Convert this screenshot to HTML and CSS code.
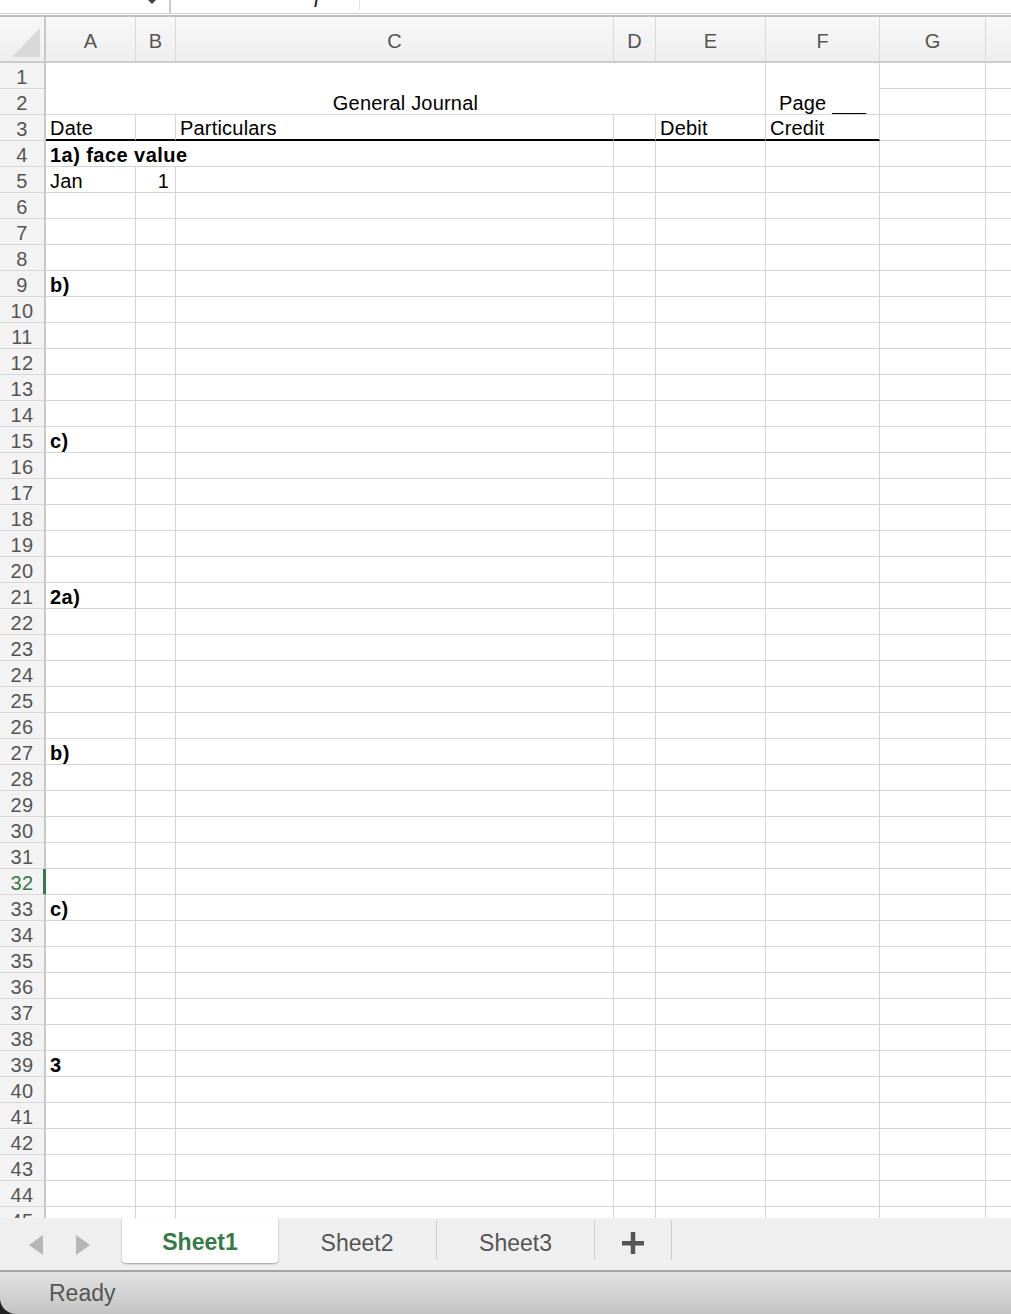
FILE: index.html
```html
<!DOCTYPE html>
<html>
<head>
<meta charset="utf-8">
<link rel="stylesheet" href="styles.css">
</head>
<body>
<div class="topbar">
  <div class="namebox"><span class="caret"></span></div>
  <div class="formula"><span class="fx">f</span><span class="fdiv"></span></div>
</div>
<div class="sheet">
  <div class="corner"><svg width="44" height="44" viewBox="0 0 44 44"><polygon points="40,11 40,40 12,40" fill="#d9d9d9"/></svg></div>
  <div class="ch">A</div><div class="ch">B</div><div class="ch">C</div><div class="ch">D</div><div class="ch">E</div><div class="ch">F</div><div class="ch">G</div><div class="ch"></div>

  <div class="rh">1</div><div class="c m s5 r2">General Journal</div><div class="c m r2">Page ___</div><div class="c"></div><div class="c"></div>
  <div class="rh">2</div><div class="c"></div><div class="c"></div>

  <div class="rh">3</div><div class="c t">Date</div><div class="c t"></div><div class="c t">Particulars</div><div class="c t"></div><div class="c t">Debit</div><div class="c t">Credit</div><div class="c"></div><div class="c"></div>
  <div class="rh">4</div><div class="c b s3">1a) face value</div><div class="c"></div><div class="c"></div><div class="c"></div><div class="c"></div><div class="c"></div>
  <div class="rh">5</div><div class="c">Jan</div><div class="c r">1</div><div class="c"></div><div class="c"></div><div class="c"></div><div class="c"></div><div class="c"></div><div class="c"></div>
  <div class="rh">6</div><div class="c"></div><div class="c"></div><div class="c"></div><div class="c"></div><div class="c"></div><div class="c"></div><div class="c"></div><div class="c"></div>
  <div class="rh">7</div><div class="c"></div><div class="c"></div><div class="c"></div><div class="c"></div><div class="c"></div><div class="c"></div><div class="c"></div><div class="c"></div>
  <div class="rh">8</div><div class="c"></div><div class="c"></div><div class="c"></div><div class="c"></div><div class="c"></div><div class="c"></div><div class="c"></div><div class="c"></div>
  <div class="rh">9</div><div class="c b">b)</div><div class="c"></div><div class="c"></div><div class="c"></div><div class="c"></div><div class="c"></div><div class="c"></div><div class="c"></div>
  <div class="rh">10</div><div class="c"></div><div class="c"></div><div class="c"></div><div class="c"></div><div class="c"></div><div class="c"></div><div class="c"></div><div class="c"></div>
  <div class="rh">11</div><div class="c"></div><div class="c"></div><div class="c"></div><div class="c"></div><div class="c"></div><div class="c"></div><div class="c"></div><div class="c"></div>
  <div class="rh">12</div><div class="c"></div><div class="c"></div><div class="c"></div><div class="c"></div><div class="c"></div><div class="c"></div><div class="c"></div><div class="c"></div>
  <div class="rh">13</div><div class="c"></div><div class="c"></div><div class="c"></div><div class="c"></div><div class="c"></div><div class="c"></div><div class="c"></div><div class="c"></div>
  <div class="rh">14</div><div class="c"></div><div class="c"></div><div class="c"></div><div class="c"></div><div class="c"></div><div class="c"></div><div class="c"></div><div class="c"></div>
  <div class="rh">15</div><div class="c b">c)</div><div class="c"></div><div class="c"></div><div class="c"></div><div class="c"></div><div class="c"></div><div class="c"></div><div class="c"></div>
  <div class="rh">16</div><div class="c"></div><div class="c"></div><div class="c"></div><div class="c"></div><div class="c"></div><div class="c"></div><div class="c"></div><div class="c"></div>
  <div class="rh">17</div><div class="c"></div><div class="c"></div><div class="c"></div><div class="c"></div><div class="c"></div><div class="c"></div><div class="c"></div><div class="c"></div>
  <div class="rh">18</div><div class="c"></div><div class="c"></div><div class="c"></div><div class="c"></div><div class="c"></div><div class="c"></div><div class="c"></div><div class="c"></div>
  <div class="rh">19</div><div class="c"></div><div class="c"></div><div class="c"></div><div class="c"></div><div class="c"></div><div class="c"></div><div class="c"></div><div class="c"></div>
  <div class="rh">20</div><div class="c"></div><div class="c"></div><div class="c"></div><div class="c"></div><div class="c"></div><div class="c"></div><div class="c"></div><div class="c"></div>
  <div class="rh">21</div><div class="c b">2a)</div><div class="c"></div><div class="c"></div><div class="c"></div><div class="c"></div><div class="c"></div><div class="c"></div><div class="c"></div>
  <div class="rh">22</div><div class="c"></div><div class="c"></div><div class="c"></div><div class="c"></div><div class="c"></div><div class="c"></div><div class="c"></div><div class="c"></div>
  <div class="rh">23</div><div class="c"></div><div class="c"></div><div class="c"></div><div class="c"></div><div class="c"></div><div class="c"></div><div class="c"></div><div class="c"></div>
  <div class="rh">24</div><div class="c"></div><div class="c"></div><div class="c"></div><div class="c"></div><div class="c"></div><div class="c"></div><div class="c"></div><div class="c"></div>
  <div class="rh">25</div><div class="c"></div><div class="c"></div><div class="c"></div><div class="c"></div><div class="c"></div><div class="c"></div><div class="c"></div><div class="c"></div>
  <div class="rh">26</div><div class="c"></div><div class="c"></div><div class="c"></div><div class="c"></div><div class="c"></div><div class="c"></div><div class="c"></div><div class="c"></div>
  <div class="rh">27</div><div class="c b">b)</div><div class="c"></div><div class="c"></div><div class="c"></div><div class="c"></div><div class="c"></div><div class="c"></div><div class="c"></div>
  <div class="rh">28</div><div class="c"></div><div class="c"></div><div class="c"></div><div class="c"></div><div class="c"></div><div class="c"></div><div class="c"></div><div class="c"></div>
  <div class="rh">29</div><div class="c"></div><div class="c"></div><div class="c"></div><div class="c"></div><div class="c"></div><div class="c"></div><div class="c"></div><div class="c"></div>
  <div class="rh">30</div><div class="c"></div><div class="c"></div><div class="c"></div><div class="c"></div><div class="c"></div><div class="c"></div><div class="c"></div><div class="c"></div>
  <div class="rh">31</div><div class="c"></div><div class="c"></div><div class="c"></div><div class="c"></div><div class="c"></div><div class="c"></div><div class="c"></div><div class="c"></div>
  <div class="rh sel">32</div><div class="c"></div><div class="c"></div><div class="c"></div><div class="c"></div><div class="c"></div><div class="c"></div><div class="c"></div><div class="c"></div>
  <div class="rh">33</div><div class="c b">c)</div><div class="c"></div><div class="c"></div><div class="c"></div><div class="c"></div><div class="c"></div><div class="c"></div><div class="c"></div>
  <div class="rh">34</div><div class="c"></div><div class="c"></div><div class="c"></div><div class="c"></div><div class="c"></div><div class="c"></div><div class="c"></div><div class="c"></div>
  <div class="rh">35</div><div class="c"></div><div class="c"></div><div class="c"></div><div class="c"></div><div class="c"></div><div class="c"></div><div class="c"></div><div class="c"></div>
  <div class="rh">36</div><div class="c"></div><div class="c"></div><div class="c"></div><div class="c"></div><div class="c"></div><div class="c"></div><div class="c"></div><div class="c"></div>
  <div class="rh">37</div><div class="c"></div><div class="c"></div><div class="c"></div><div class="c"></div><div class="c"></div><div class="c"></div><div class="c"></div><div class="c"></div>
  <div class="rh">38</div><div class="c"></div><div class="c"></div><div class="c"></div><div class="c"></div><div class="c"></div><div class="c"></div><div class="c"></div><div class="c"></div>
  <div class="rh">39</div><div class="c b">3</div><div class="c"></div><div class="c"></div><div class="c"></div><div class="c"></div><div class="c"></div><div class="c"></div><div class="c"></div>
  <div class="rh">40</div><div class="c"></div><div class="c"></div><div class="c"></div><div class="c"></div><div class="c"></div><div class="c"></div><div class="c"></div><div class="c"></div>
  <div class="rh">41</div><div class="c"></div><div class="c"></div><div class="c"></div><div class="c"></div><div class="c"></div><div class="c"></div><div class="c"></div><div class="c"></div>
  <div class="rh">42</div><div class="c"></div><div class="c"></div><div class="c"></div><div class="c"></div><div class="c"></div><div class="c"></div><div class="c"></div><div class="c"></div>
  <div class="rh">43</div><div class="c"></div><div class="c"></div><div class="c"></div><div class="c"></div><div class="c"></div><div class="c"></div><div class="c"></div><div class="c"></div>
  <div class="rh">44</div><div class="c"></div><div class="c"></div><div class="c"></div><div class="c"></div><div class="c"></div><div class="c"></div><div class="c"></div><div class="c"></div>
  <div class="rh">45</div><div class="c"></div><div class="c"></div><div class="c"></div><div class="c"></div><div class="c"></div><div class="c"></div><div class="c"></div><div class="c"></div>
</div>
<div class="tabs">
  <div class="nav"><svg width="122" height="52" viewBox="0 0 122 52"><polygon points="43,17 29,27 43,37" fill="#b6b6b6"/><polygon points="76,17 90,27 76,37" fill="#b6b6b6"/></svg></div>
  <div class="tab active">Sheet1</div>
  <div class="tab">Sheet2</div>
  <div class="tab">Sheet3</div>
  <div class="tab plus"><svg width="22" height="22" viewBox="0 0 22 22"><rect x="0" y="9" width="22" height="4.5" fill="#555"/><rect x="8.75" y="0" width="4.5" height="22" fill="#555"/></svg></div>
</div>
<div class="statuswrap"><div class="status">Ready</div></div>
</body>
</html>
```
FILE: styles.css
```css
* { box-sizing: border-box; }
html, body { margin: 0; padding: 0; }
body {
  width: 1011px;
  height: 1314px;
  overflow: hidden;
  background: #fff;
  font-family: "Liberation Sans", Arial, sans-serif;
}

/* formula bar remnant */
.topbar {
  height: 14px;
  display: flex;
  overflow: hidden;
  border-bottom: 1px solid #cfcfcf;
}
.namebox {
  width: 171px;
  border-right: 2px solid #cacaca;
  margin-right: 1px;
  display: flex;
  justify-content: flex-end;
  padding-right: 13px;
}
.caret {
  width: 0;
  height: 0;
  border-left: 4px solid transparent;
  border-right: 4px solid transparent;
  border-top: 4px solid #444;
}
.formula {
  flex: 1;
  display: flex;
  align-items: flex-start;
}
.fx {
  font-family: "Liberation Serif", serif;
  font-style: italic;
  font-size: 24px;
  line-height: 24px;
  margin-top: -18px;
  margin-left: 142px;
  color: #222;
}
.fdiv {
  width: 1px;
  height: 10px;
  background: #e4e4e4;
  margin-left: 38px;
}

/* sheet grid */
.sheet {
  width: 1011px;
  height: 1203px;
  margin-top: 1px;
  overflow: hidden;
  border-top: 2px solid #bdbdbd;
  display: grid;
  grid-template-columns: 46px 90px 40px 438px 42px 110px 114px 106px 40px;
  grid-template-rows: 46px;
  grid-auto-rows: 26px;
  align-content: start;
}
.corner, .ch {
  background: linear-gradient(#f8f8f8, #eeeeee);
  border-bottom: 2px solid #cbcbcb;
}
.corner {
  border-right: 2px solid #c8c8c8;
}
.corner svg { display: block; }
.ch {
  border-right: 1px solid #d9d9d9;
  display: flex;
  align-items: center;
  justify-content: center;
  padding-top: 4px;
  color: #555;
  font-size: 20px;
}
.rh {
  background: #f3f3f3;
  border-right: 2px solid #c8c8c8;
  border-bottom: 1px solid #d7d7d7;
  color: #555;
  font-size: 20px;
  line-height: 22px;
  display: flex;
  align-items: flex-end;
  justify-content: center;
  padding-bottom: 0;
  letter-spacing: 0.3px;
}
.rh.sel {
  color: #357a49;
  border-right-color: #357a49;
  box-shadow: inset -1px 0 0 #357a49;
}
.c {
  border-right: 1px solid #d5d5d5;
  border-bottom: 1px solid #d5d5d5;
  display: flex;
  align-items: flex-end;
  padding: 0 4px;
  font-size: 20px;
  line-height: 22px;
  letter-spacing: 0.2px;
  color: #000;
  white-space: nowrap;
  overflow: hidden;
}
.c.b { font-weight: bold; letter-spacing: 0.45px; }
.c.r { justify-content: flex-end; padding-right: 6px; }
.c.m { justify-content: center; }
.c.t { border-bottom: 2px solid #000; }
.s5 { grid-column: span 5; }
.s3 { grid-column: span 3; }
.r2 { grid-row: span 2; }

/* sheet tabs */
.tabs {
  height: 54px;
  background: #efefef;
  border-bottom: 2px solid #a4a4a4;
  display: flex;
  align-items: flex-start;
}
.nav { width: 122px; height: 52px; }
.nav svg { display: block; }
.tab {
  width: 158px;
  height: 40px;
  margin-top: 2px;
  padding-top: 6px;
  border-right: 1px solid #cdcdcd;
  display: flex;
  align-items: center;
  justify-content: center;
  color: #555;
  font-size: 23px;
}
.tab:nth-child(3) { width: 159px; }
.tab.active {
  width: 156px;
  height: 45px;
  margin-top: 0;
  padding-top: 4px;
  border-right: none;
  background: #fff;
  border-radius: 0 0 4px 4px;
  box-shadow: 0 1px 2px rgba(0, 0, 0, 0.35);
  color: #357a49;
  font-weight: bold;
}
.tab.plus { width: 77px; }
.tab.plus svg { display: block; }

/* status bar */
.statuswrap {
  height: 42px;
  background: #222;
}
.status {
  height: 42px;
  background: linear-gradient(#e2e2e2, #c4c4c4);
  border-bottom-left-radius: 16px;
  padding-left: 49px;
  display: flex;
  align-items: center;
  color: #555;
  font-size: 23px;
}
```
